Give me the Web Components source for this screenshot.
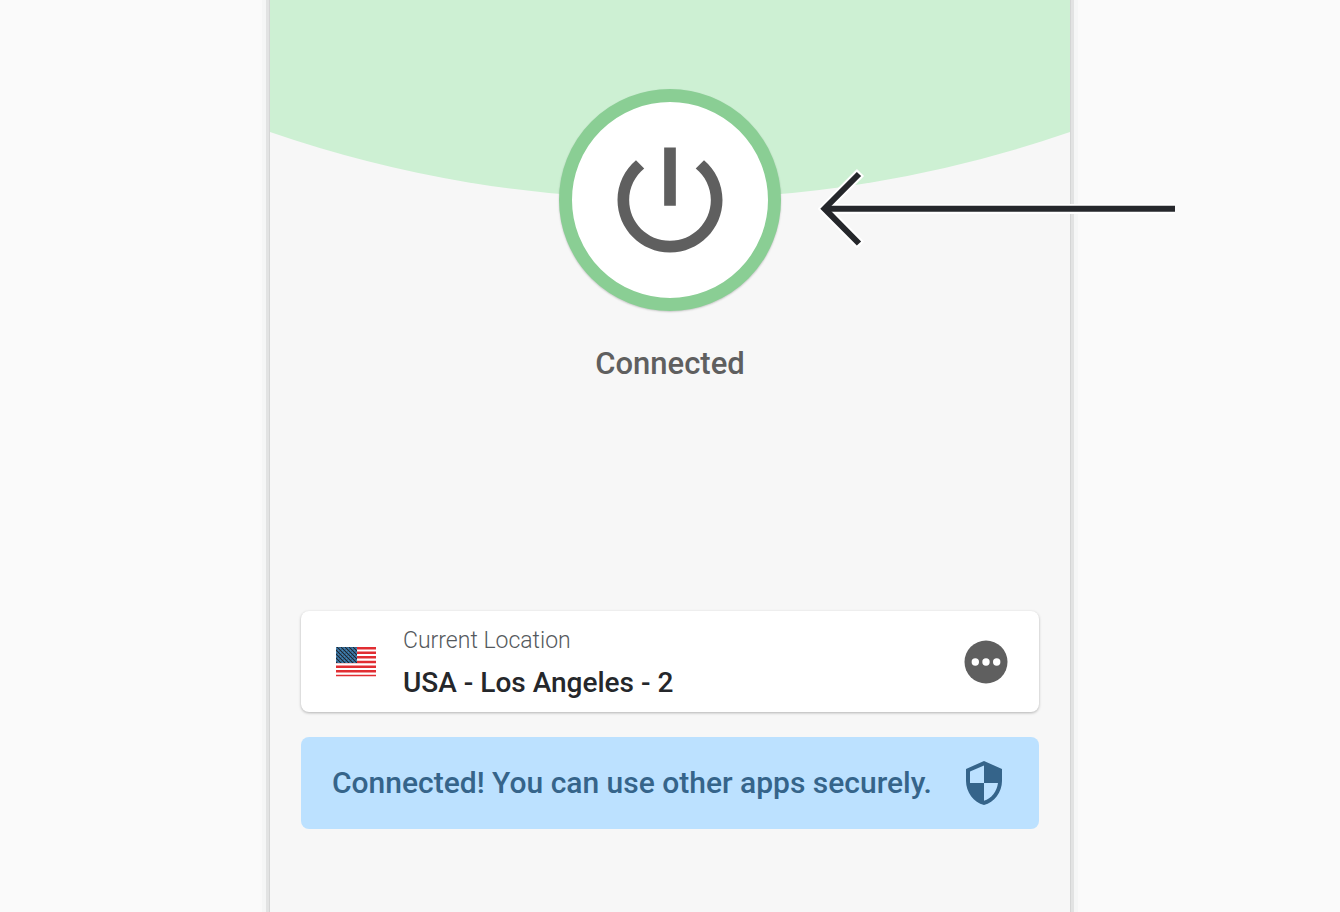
<!DOCTYPE html>
<html lang="en">
<head>
<meta charset="utf-8">
<meta name="viewport" content="width=device-width, initial-scale=1">
<title>VPN connection</title>
<style>
  html, body { margin: 0; min-height: 100%; }
  body { background: #fafafa; font-family: Roboto, "Liberation Sans", sans-serif; overflow-x: hidden; }
</style>
</head>
<body>
<vpn-screen>
  <power-toggle slot="hero">Connected</power-toggle>
  <location-card label="Current Location">USA - Los Angeles - 2</location-card>
  <status-banner>Connected! You can use other apps securely.</status-banner>
</vpn-screen>
<script>
class ShadowElement extends HTMLElement {
  constructor() {
    super();
    this.attachShadow({ mode: 'open' }).innerHTML = this.constructor.markup;
  }
}

customElements.define('vpn-screen', class extends ShadowElement {
  static markup = `
    <style>
      :host { display: flex; justify-content: center; min-height: 100vh; }
      main {
        position: relative; box-sizing: border-box; width: 100%; max-width: 800px;
        background: #f7f7f7;
        box-shadow: 0 0 0 1px #d4d5d5, 0 0 0 4px #e2e3e3, 0 0 0 8px #f5f6f6;
      }
      .sky { position: absolute; top: 0; left: 0; width: 100%; height: 200px; display: block; }
      .hero { position: relative; padding-top: 89px; }
      .stack { display: flex; flex-direction: column; gap: 25px; padding: 227px 31px 32px; }
      point-arrow { position: absolute; top: 168px; left: calc(50% + 148px); }
    </style>
    <main>
      <svg class="sky" viewBox="0 0 800 200" preserveAspectRatio="none" aria-hidden="true">
        <path d="M0 0H800V132A1227 1227 0 0 1 0 132Z" fill="#cdf0d3"/>
      </svg>
      <div class="hero"><slot name="hero"></slot></div>
      <div class="stack"><slot></slot></div>
      <point-arrow></point-arrow>
    </main>`;
});

customElements.define('power-toggle', class extends ShadowElement {
  static markup = `
    <style>
      :host { display: flex; flex-direction: column; align-items: center; gap: 33px; color: #5f5f5f; }
      button {
        box-sizing: border-box; width: 222px; height: 222px; padding: 0; border: 13px solid #8ace94;
        border-radius: 50%; background: #fff; color: inherit; cursor: pointer;
        display: grid; place-items: center; box-shadow: 0 1px 2px rgba(0,0,0,.2);
      }
      svg { display: block; width: 140px; height: 140px; }
      p { margin: 0; font-size: 31px; line-height: 40px; font-weight: 500; }
    </style>
    <button type="button" aria-labelledby="state" aria-pressed="true">
      <svg viewBox="0 0 24 24" fill="currentColor" aria-hidden="true"><path d="M13 3h-2v10h2V3zm4.83 2.17l-1.42 1.42C17.99 7.86 19 9.81 19 12c0 3.87-3.13 7-7 7s-7-3.13-7-7c0-2.19 1.01-4.14 2.58-5.42L6.17 5.17C4.23 6.82 3 9.26 3 12c0 4.97 4.03 9 9 9s9-4.03 9-9c0-2.74-1.23-5.18-3.17-6.83z"/></svg>
    </button>
    <p id="state"><slot></slot></p>`;
});

customElements.define('us-flag', class extends ShadowElement {
  static markup = `
    <style>:host { display: block; width: 40px; height: 30px; } svg { display: block; width: 100%; height: 100%; }</style>
    <svg viewBox="0 0 40 30" aria-hidden="true">
      <defs>
        <pattern id="stars" width="4" height="4" patternUnits="userSpaceOnUse">
          <rect width="4" height="4" fill="#32648c"/>
          <path d="M1 0h1v1h-1zM3 2h1v1h-1zM0 3h1v1h-1zM2 1h1v1h-1z" fill="#22272f"/>
          <path d="M0 1h1v1h-1zM2 3h1v1h-1z" fill="#4585b5"/>
        </pattern>
      </defs>
      <rect width="40" height="30" fill="#fff"/>
      <path d="M0 0h40v2.400H0zM0 4.500h40v2.500H0zM0 9h40v2.400H0zM0 13.700h40v2.500H0zM0 18.500h40v2.500H0zM0 23h40v2.500H0zM0 27.700h40v1.600H0z" fill="#e12d32"/>
      <rect width="21" height="16" fill="url(#stars)"/>
    </svg>`;
});

customElements.define('location-card', class extends ShadowElement {
  static markup = `
    <style>
      :host {
        display: flex; align-items: center; gap: 27px; box-sizing: border-box; min-height: 101px;
        padding: 0 31px 0 35px; background: #fff; border-radius: 8px;
        box-shadow: 0 1px 3px rgba(0,0,0,.28);
      }
      .text { flex: 1; display: flex; flex-direction: column; gap: 6px; min-width: 0; padding: 12px 0 8px; }
      .label { font-size: 23px; line-height: 32px; font-weight: 300; color: #55595d; }
      .name { font-size: 28px; line-height: 40px; font-weight: 500; color: #25272b; }
      button { border: 0; padding: 0; background: none; cursor: pointer; }
      svg { display: block; width: 44px; height: 44px; }
    </style>
    <us-flag></us-flag>
    <div class="text"><span class="label"></span><span class="name"><slot></slot></span></div>
    <button type="button" aria-label="Change location">
      <svg viewBox="0 0 44 44" aria-hidden="true"><circle cx="22" cy="22" r="21.5" fill="#5f5f5f"/><g fill="#fff"><circle cx="11.3" cy="22" r="3.7"/><circle cx="22" cy="22" r="3.7"/><circle cx="32.7" cy="22" r="3.7"/></g></svg>
    </button>`;
  connectedCallback() {
    this.shadowRoot.querySelector('.label').textContent = this.getAttribute('label');
  }
});

customElements.define('status-banner', class extends ShadowElement {
  static markup = `
    <style>
      :host {
        display: flex; align-items: center; justify-content: space-between; gap: 24px;
        box-sizing: border-box; min-height: 92px; padding: 8px 31px;
        background: #bce1ff; border-radius: 8px; color: #35648a;
      }
      p { margin: 0; font-size: 30px; line-height: 40px; font-weight: 500; }
      svg { display: block; flex: none; width: 48px; height: 48px; }
    </style>
    <p role="status"><slot></slot></p>
    <svg viewBox="0 0 24 24" fill="currentColor" aria-hidden="true"><path d="M12 1L3 5v6c0 5.55 3.84 10.74 9 12 5.16-1.26 9-6.45 9-12V5l-9-4zm0 10.99h7c-.53 4.12-3.28 7.79-7 8.94V12H5V6.3l7-3.11v8.8z"/></svg>`;
});

customElements.define('point-arrow', class extends ShadowElement {
  static markup = `
    <style>:host { display: block; width: 360px; height: 80px; pointer-events: none; } svg { display: block; width: 100%; height: 100%; }</style>
    <svg viewBox="0 0 360 80" fill="none" aria-hidden="true">
      <g stroke="#fff" stroke-width="10"><path d="M42.500 4.500L6.500 40.700L42.500 77"/><path d="M7 41H357"/></g>
      <g stroke="#25272b" stroke-width="6"><path d="M41 6L6.500 40.700L41 75.500"/><path d="M7 40.700H357"/></g>
    </svg>`;
});
</script>
</body>
</html>
